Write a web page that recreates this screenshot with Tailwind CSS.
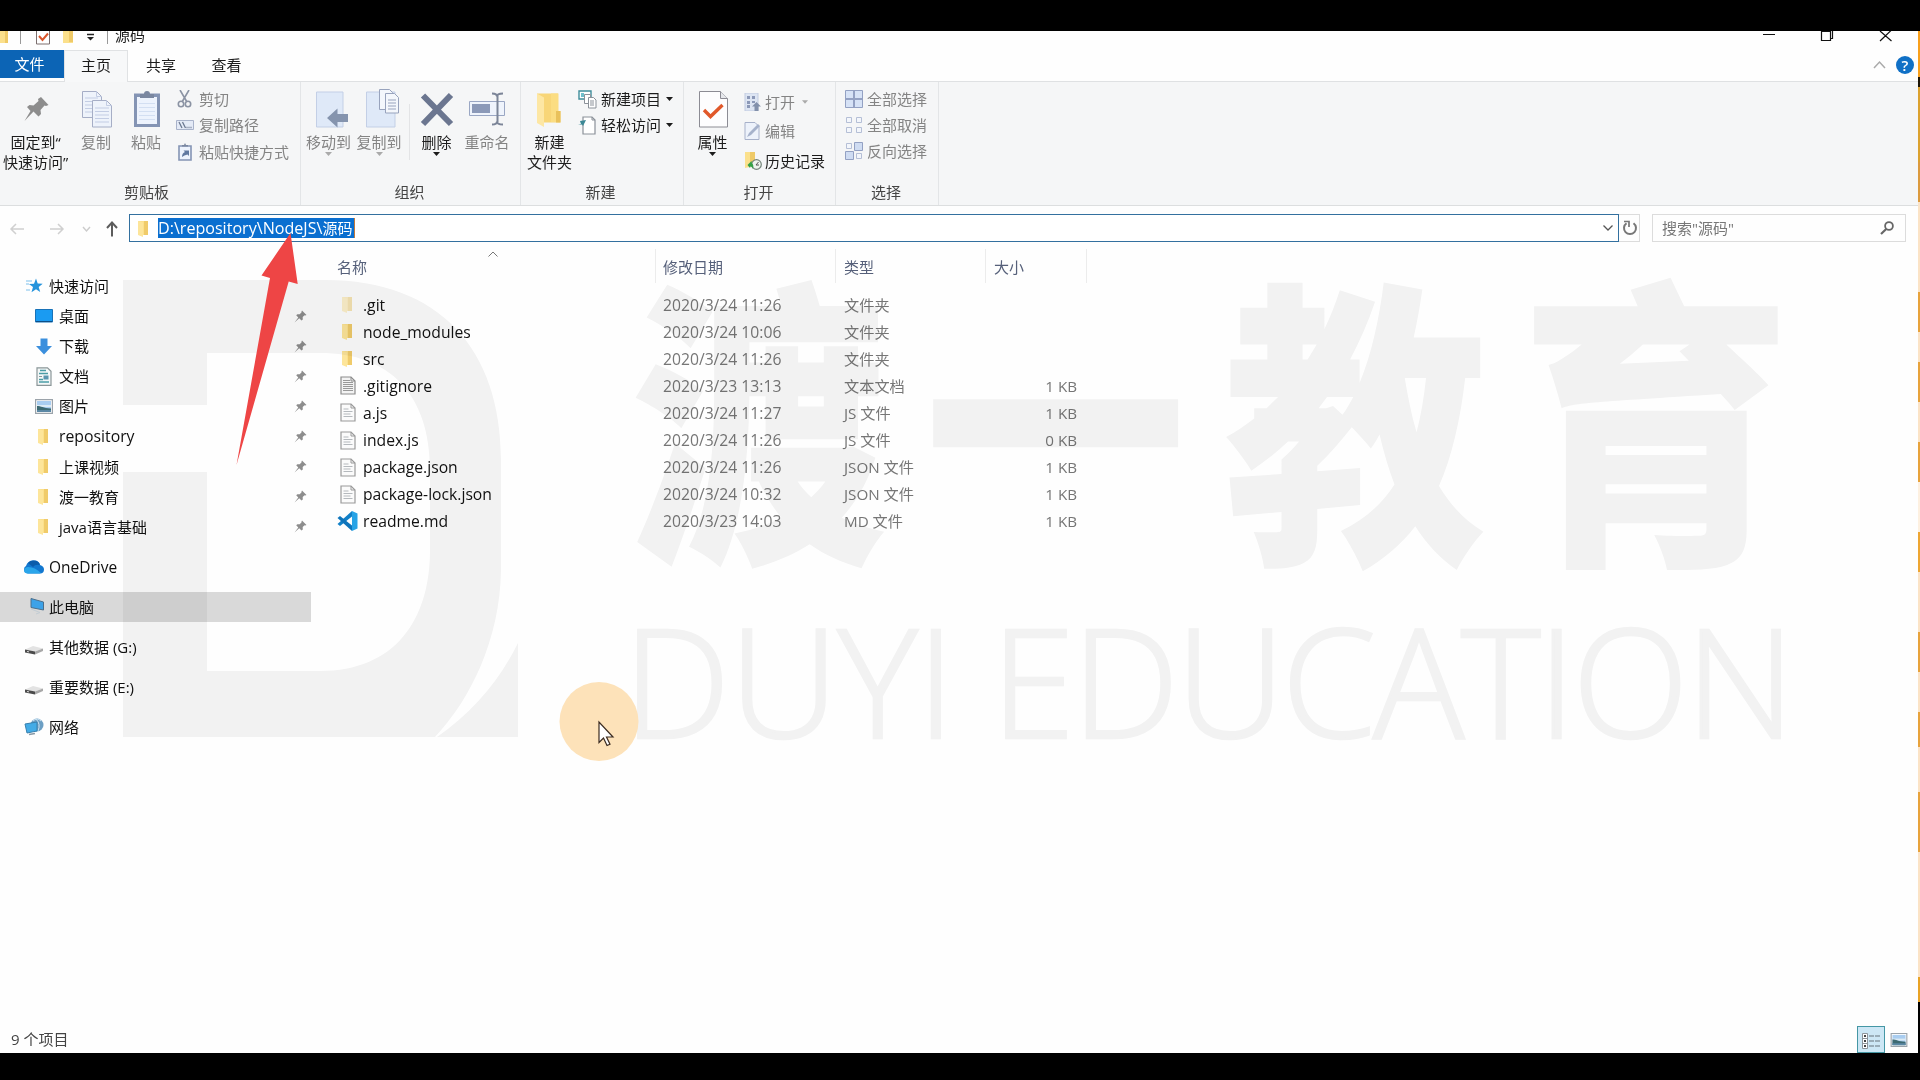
<!DOCTYPE html>
<html lang="zh-CN">
<head>
<meta charset="utf-8">
<title>源码</title>
<script src="https://cdn.jsdelivr.net/npm/@tailwindcss/browser@4"></script>
</head>
<body class="bg-black">
<!-- shared icon shapes -->
<svg class="hidden">
  <symbol id="folder" viewBox="0 0 12 17"><path d="M1 1h8v1.5h2V15H1z" fill="#fbe08c"/><path d="M7 1h4v14H7z" fill="#f0cb6a"/><path d="M1 1l5 1.5V17l-5-2z" fill="#fde59a"/></symbol>
  <symbol id="pin" viewBox="0 0 13 13"><path d="M8 .5 12.5 5l-1.3.4-.6-.2-1.900 1.900.1 2.300-1.300 1.100-2.300-2.300L.5 12.500 4.300 7.400 2.200 5.300l1.200-1.100 2.300.1 1.900-2-.1-.7z" fill="#8d8d8d"/></symbol>
  <symbol id="file" viewBox="0 0 16 19"><path d="M1 1h10l4 4v13H1z" fill="#fbfbfb" stroke="#9a9a9a" stroke-width="1.2"/><path d="M11 1v4h4" fill="none" stroke="#9a9a9a"/><path d="M3.500 6h5M3.500 8.500h9M3.500 11h7M3.500 13.500h9" stroke="#b5b9bd" stroke-width="1"/></symbol>
  <symbol id="textfile" viewBox="0 0 16 19"><path d="M1 1h10l4 4v13H1z" fill="#f3f3f3" stroke="#8c8c8c" stroke-width="1.2"/><path d="M11 1v4h4" fill="none" stroke="#8c8c8c"/><path d="M3 4.500h7M3 6.500h10M3 8.500h10M3 10.500h10M3 12.500h10M3 14.500h10" stroke="#999" stroke-width="1.1"/></symbol>
  <symbol id="drive" viewBox="0 0 20 10"><path d="M1 4.500 9 1l10 2.500-8 3z" fill="#e3e3e3"/><path d="M1 4.500 11 6.500v3L1 7.500z" fill="#4b4b4b"/><path d="M11 6.500l8-3V6l-8 3.500z" fill="#a8a8a8"/><path d="M3 6.500l2 .4" stroke="#ddd"/></symbol>
  <symbol id="photo" viewBox="0 0 18 15"><path d="M.6.600h16.800v13.800H.600z" fill="#fff" stroke="#9ba3aa" stroke-width="1.200"/><path d="M2 2h14v11H2z" fill="#a9cdf0"/><path d="M2 6h14v2H2z" fill="#dcebf5"/><path d="M2 7c4 0 6 2 14 2.500V13H2z" fill="#3d6a72"/><path d="M2 11h14v2H2z" fill="#5b88a5"/></symbol>
  <symbol id="caret" viewBox="0 0 7 4"><path d="M0 0h7L3.500 4z" fill="currentColor"/></symbol>
</svg>

<div class="relative h-[1080px] w-[1920px] overflow-hidden bg-black pt-[31px] font-['Open_Sans','Noto_Sans_CJK_SC',sans-serif] text-[15px] leading-5 text-[#1c1c1c]">
<div class="flex h-[1022px] w-full">
<div class="flex w-[1918px] flex-col overflow-hidden bg-[#fefefe]">

  <!-- title bar -->
  <header class="flex h-[19px] shrink-0 justify-between overflow-hidden">
    <div class="flex h-[19px] items-start">
      <svg class="h-[19px] w-[110px]" viewBox="0 0 110 19"><path d="M0 0h8v12H0z" fill="#fbe08c"/><path d="M5 0h3v12H5z" fill="#efca68"/><path d="M20.500 0v13M107.500 0v13" stroke="#999"/><path d="M36.500-2h13v15h-13z" fill="#fff" stroke="#7c6f6f"/><path d="m39 5 3.500 4L48 2.500" fill="none" stroke="#d9552b" stroke-width="2"/><path d="M63 0h10v12H63z" fill="#fbe08c"/><path d="M69 0h4v11h-4z" fill="#efca68"/><path d="M87 3.500h7" stroke="#222" stroke-width="1.500"/><path d="M87 6h7l-3.500 3.500z" fill="#222"/></svg>
      <span class="-mt-[6px] ml-[5px]">源码</span>
    </div>
    <svg class="h-[19px] w-[158px]" viewBox="0 0 158 19" fill="none" stroke="#111" stroke-width="1.200"><path d="M3 3.500h12M61.500.500h9v9h-9zM70.500 7.500h2V0M120 0l11.500 10M131.500-1 120 10"/></svg>
  </header>

  <!-- tabs -->
  <nav class="flex h-8 shrink-0 border-b border-[#dfe1e3]">
    <div class="flex h-[28px] w-16 items-center justify-center bg-[#0c64b5] pr-[5px] text-white">文件</div>
    <div class="flex h-8 w-16 items-center justify-center border-x border-t border-[#e0e2e4] bg-[#f7f8f9] pb-[3px]">主页</div>
    <div class="flex w-[66px] items-center justify-center pb-[2px]">共享</div>
    <div class="flex w-[65px] items-center justify-center pb-[2px]">查看</div>
    <svg class="ml-auto h-8 w-[50px]" viewBox="0 0 50 32"><path d="m6 18 5.500-6 5.500 6" fill="none" stroke="#aaa" stroke-width="1.500"/><circle cx="37" cy="15" r="9" fill="#1070c6"/><text x="37" y="20.500" text-anchor="middle" font-size="15" font-weight="600" fill="#fff">?</text></svg>
  </nav>

  <!-- ribbon -->
  <section class="flex h-[124px] shrink-0 border-b border-[#dcdedf] bg-[#f5f6f7]">
    <div class="flex w-[301px] flex-col border-r border-[#e3e5e7]">
      <div class="flex h-[100px] text-[#848484]">
        <div class="flex w-[71px] flex-col text-center whitespace-nowrap text-[#1c1c1c]">
          <svg class="h-[50px] w-[71px] shrink-0" viewBox="0 82 71 50"><path d="M41 97l7.500 8-2.500 1-1.500-.5-4 4.500.500 4-2.500 2.500-5-5L24.500 121l6-10-3.500-4 2.500-2 4 .500 5-4.500-.500-2z" fill="#8d8d8d"/></svg>
          <div>固定到“</div><div>快速访问”</div>
        </div>
        <div class="w-[50px] text-center">
          <svg class="h-[50px] w-[50px]" viewBox="71 82 50 50" fill="#eef3fb" stroke="#a6aec6"><path d="M82.500 91.500h14l5 5v21h-19z"/><path d="M96.500 91.500v5h5M85 98h13M85 101.500h13M85 105h13M85 108.500h13M85 112h13" fill="none" stroke="#c3cde4"/><path d="M92.500 100.500h14l5 5V127h-19z"/><path d="M106.500 100.500v5h5M95 108h14M95 111.500h14M95 115h14M95 118.500h14M95 122h14" fill="none" stroke="#c3cde4"/></svg>
          <div>复制</div>
        </div>
        <div class="w-[50px] text-center">
          <svg class="h-[50px] w-[50px]" viewBox="121 82 50 50"><path d="M134 93.500h26V127h-26z" fill="#8494b4"/><path d="M137 97h20v27h-20z" fill="#edf3fd"/><path d="M139 103.500h16M139 107.500h16M139 111.500h16M139 115.500h16M139 119.500h16" stroke="#d3dff2"/><path d="M140 98v-4h4q0-3 3-3t3 3h4v4z" fill="#7a87a0"/></svg>
          <div>粘贴</div>
        </div>
        <div class="flex flex-col pt-[4px] pl-[5px]">
          <div class="flex h-[26px] items-center"><svg class="mr-[5px] size-[18px]" viewBox="0 0 18 18" fill="none" stroke="#8b93a3" stroke-width="1.600"><path d="M4 0l7 12M13 0 6 12"/><circle cx="5" cy="14" r="2.700"/><circle cx="12" cy="14" r="2.700"/></svg>剪切</div>
          <div class="flex h-[26px] items-center"><svg class="mr-[5px] size-[18px]" viewBox="0 0 18 18"><path d="M.5 4.500h17v9H.500z" fill="#e4eaf6" stroke="#a9b3ca"/><path d="M3 6l3 6M6.500 6l3 6M10.500 11.500h1M12.500 11.500h1M14.500 11.500h1" stroke="#6c7890" stroke-width="1.300"/></svg>复制路径</div>
          <div class="flex h-[27px] items-center"><svg class="mr-[5px] size-[18px]" viewBox="0 0 18 18"><path d="M3 3h12v14H3z" fill="#edf3fd" stroke="#8494b4" stroke-width="1.600"/><path d="M6 3.500V2h2l1-2 1 2h2v1.500z" fill="#7a87a0"/><path d="M6 14q0-4 3-5L7.500 7.500H13V13l-1.500-1.500Q8 12 6 14z" fill="#6078a0"/></svg>粘贴快捷方式</div>
        </div>
      </div>
      <div class="pr-[7px] text-center text-[#444]">剪贴板</div>
    </div>

    <div class="flex w-[220px] flex-col border-r border-[#e3e5e7]">
      <div class="flex h-[100px] pl-[2px] text-center text-[#848484]">
        <div class="flex w-[51px] flex-col items-center whitespace-nowrap">
          <svg class="h-[50px] w-[51px]" viewBox="304 82 51 50"><path d="M317.500 92H344v35h-26.500z" fill="#dfe9f8" stroke="#c3cfe6"/><path d="M328 118l10.500-9.500v5.500H349v8h-10.500v5.500z" fill="#8594ae"/></svg>
          <div>移动到</div><svg class="h-1 w-[7px] text-[#aaa]"><use href="#caret"/></svg>
        </div>
        <div class="flex w-[50px] flex-col items-center whitespace-nowrap">
          <svg class="h-[50px] w-[50px]" viewBox="355 82 50 50"><path d="M367.500 92H396v35h-28.500z" fill="#dfe9f8" stroke="#c3cfe6"/><g fill="#f4f7fc" stroke="#98a3bd"><path d="M380.500 89.500h10l3 3v17h-13z"/><path d="M386.500 93.500h9l4 4V113h-13z"/><path d="M389 100h8M389 103h8M389 106h8M389 109h8"/></g></svg>
          <div>复制到</div><svg class="h-1 w-[7px] text-[#aaa]"><use href="#caret"/></svg>
        </div>
        <div class="mt-[22px] ml-[5px] h-14 w-px bg-[#e3e4e6]"></div>
        <div class="flex w-[53px] flex-col items-center text-[#1c1c1c]">
          <svg class="h-[50px] w-[53px]" viewBox="411 82 53 50"><path d="M424 95.500 452 124M452 95 424 124" stroke="#6b7690" stroke-width="6"/></svg>
          <div>删除</div><svg class="h-1 w-[7px]"><use href="#caret"/></svg>
        </div>
        <div class="w-[48px]">
          <svg class="h-[50px] w-[48px]" viewBox="464 82 48 50"><path d="M470.500 101.500h35v14h-35z" fill="#eff4fc" stroke="#9aa7c4"/><path d="M473 104h18v9h-18z" fill="#8b99b8"/><path d="M493 93.500q5 0 5 3 0-3 6-3M493 124.500q5 0 5-3 0 3 6 3M498.500 96v26" fill="none" stroke="#7c8598" stroke-width="2"/></svg>
          <div class="whitespace-nowrap">重命名</div>
        </div>
      </div>
      <div class="pr-[2px] text-center text-[#444]">组织</div>
    </div>

    <div class="flex w-[163px] flex-col border-r border-[#e3e5e7]">
      <div class="flex h-[100px]">
        <div class="w-[57px] text-center whitespace-nowrap">
          <svg class="h-[50px] w-[57px]" viewBox="521 82 57 50"><path d="M537 93.500h21V111h2.500v11.500H541z" fill="#f8d678"/><path d="M551 93.500h7.500V122H551z" fill="#fbdd82"/><path d="M537 93.500l7 4V127l-7-4z" fill="#fde7a4"/><path d="M556 111h4.500v11.500H556z" fill="#e9c15b"/></svg>
          <div>新建</div><div>文件夹</div>
        </div>
        <div class="flex flex-col pt-[4px]">
          <div class="flex h-[26px] items-center"><svg class="size-[19px]" viewBox="0 0 19 19" fill="#fff" stroke="#8b9199"><path d="M1 1h12v8H1z" stroke="#3f8d9b" stroke-width="1.400"/><path d="M3 3h3v4H3z" fill="#6fc0cc" stroke="none"/><path d="M6.500 4.500h6v9h-6z"/><path d="M10.500 7.500h5l2.500 2.500v8h-7.500z"/><path d="M12 11h4M12 13h4M12 15h4"/></svg><span class="ml-1">新建项目</span><svg class="ml-[5px] h-1 w-[7px]"><use href="#caret"/></svg></div>
          <div class="flex h-[26px] items-center"><svg class="size-[19px]" viewBox="0 0 19 19"><path d="M5 1h9l3 3v14H5z" fill="#fff" stroke="#8b9199" stroke-width="1.200"/><path d="M14 1v3h3" fill="none" stroke="#8b9199"/><path d="M0 9l3-1-1-3 6-1-3 6-1-1.500z" fill="#3b8895"/></svg><span class="ml-1">轻松访问</span><svg class="ml-[5px] h-1 w-[7px]"><use href="#caret"/></svg></div>
        </div>
      </div>
      <div class="pr-[3px] text-center text-[#444]">新建</div>
    </div>

    <div class="flex w-[152px] flex-col border-r border-[#e3e5e7]">
      <div class="flex h-[100px]">
        <div class="flex w-[57px] flex-col items-center">
          <svg class="h-[50px] w-[57px]" viewBox="684 82 57 50"><path d="M699.500 91.500h21l7 7V127h-28z" fill="#fdfdfe" stroke="#8c8c94"/><path d="M720.500 91.500v7h7" fill="#e6e8ec" stroke="#8c8c94"/><path d="M704 110l6.500 6.500L722.500 105" fill="none" stroke="#e0582a" stroke-width="3.400"/></svg>
          <div>属性</div><svg class="h-1 w-[7px]"><use href="#caret"/></svg>
        </div>
        <div class="flex flex-col pt-[5px] pl-[3px] text-[#848484]">
          <div class="flex h-[29px] items-center"><svg class="mr-[3px] size-[18px]" viewBox="0 0 18 18"><path d="M1 0h13v18H1z" fill="#dde5f3" stroke="#c1cbe0"/><path d="M3 3h3v3H3zM8 3h3v3H8zM3 8h3v3H3zM3 12h3v3H3zM8 8h3v2H8z" fill="#8c99b8"/><path d="M12.500 9l4.500 4.500h-2.500V18h-4v-4.500H8z" fill="#8290ab"/></svg>打开<svg class="ml-[7px] h-1 w-[6px] text-[#aaa]"><use href="#caret"/></svg></div>
          <div class="flex h-[30px] items-center"><svg class="mr-[3px] size-[18px]" viewBox="0 0 18 18"><path d="M1 .5h10l4 4V17.500H1z" fill="#edf2fb" stroke="#a7b1ca"/><path d="M3 15l2-4 9-9 2 2-9 9z" fill="#a6b2cb"/></svg>编辑</div>
          <div class="flex h-[29px] items-center text-[#1c1c1c]"><svg class="mr-[3px] size-[18px]" viewBox="0 0 18 18"><path d="M1 0h9v14l-9 2z" fill="#fbe08c"/><path d="M6 0h5v10H6z" fill="#efca68"/><circle cx="12.500" cy="12.500" r="4.800" fill="#eef3ee" stroke="#73837a" stroke-width="1.200"/><path d="M12 13l2.500-3M12 13h3" stroke="#555"/><path d="M3.500 13l4-4 .500 2.500q2 1 1 5.500-1-3-2.500-2.500l-.500 1.500z" fill="#35a148"/></svg>历史记录</div>
        </div>
      </div>
      <div class="pr-[2px] text-center text-[#444]">打开</div>
    </div>

    <div class="flex w-[103px] flex-col border-r border-[#e3e5e7]">
      <div class="flex h-[100px] flex-col pt-[4px] pl-[9px] text-[#848484]">
        <div class="flex h-[26px] items-center"><svg class="mr-1 size-[18px]" viewBox="0 0 18 18" fill="#d6e2f6" stroke="#93a1c3"><path d="M.5.500h17v17H.500z"/><path d="M9 0v18M0 9h18" stroke-width="2"/></svg>全部选择</div>
        <div class="flex h-[26px] items-center"><svg class="mr-1 size-[18px]" viewBox="0 0 18 18" fill="#f3f6fb" stroke="#b5bfd6"><path d="M1.500 1.500h5v5h-5zM11.500 1.500h5v5h-5zM1.500 11.500h5v5h-5zM11.500 11.500h5v5h-5z"/></svg>全部取消</div>
        <div class="flex h-[26px] items-center"><svg class="mr-1 size-[18px]" viewBox="0 0 18 18" fill="#cfdcf2" stroke="#93a1c3"><path d="M9.500.500h8v8h-8zM.5 9.500h8v8h-8z"/><path d="M1.500 1.500h5v5h-5zM11.500 11.500h5v5h-5z" fill="#f3f6fb" stroke="#b5bfd6"/></svg>反向选择</div>
      </div>
      <div class="pr-[2px] text-center text-[#444]">选择</div>
    </div>
  </section>

  <!-- address bar -->
  <section class="flex h-[43px] shrink-0 items-start pt-2">
    <svg class="mt-px h-[27px] w-[129px]" viewBox="0 0 129 27" fill="none"><path d="M24 14H11M16 9l-5 5 5 5M50 14h13M58 9l5 5-5 5" stroke="#d0d0d0" stroke-width="1.500"/><path d="m83 12 3.500 4 3.500-4" stroke="#ccc" stroke-width="1.400"/><path d="M112 21.500V8M107 13l5-5.500 5 5.500" stroke="#5c5c5c" stroke-width="2"/></svg>
    <div class="flex h-7 w-[1490px] items-center border border-[#33709f] bg-white">
      <svg class="ml-[7px] h-[17px] w-3"><use href="#folder"/></svg>
      <div class="ml-[9px] h-5 w-[197px] border-r border-[#c27a3a] bg-[#0a6fd0] whitespace-nowrap text-white"><span class="text-[16.1px]">D:\repository\NodeJS\</span>源码</div>
      <svg class="mr-[5px] ml-auto h-2 w-[10px]" viewBox="0 0 10 8" fill="none" stroke="#555" stroke-width="1.300"><path d="m.500 1.500 4.500 4.500 4.500-4.500"/></svg>
    </div>
    <div class="flex h-7 w-[21px] items-center justify-center border-y border-r border-[#dcdcdc] pl-[2px]"><svg class="size-[16px]" viewBox="0 0 16 16"><path d="M4.500 3.200A6 6 0 1 0 11.500 3.200" fill="none" stroke="#777" stroke-width="2"/><path d="M2 1.500h5V7" fill="none" stroke="#777" stroke-width="1.700"/></svg></div>
    <div class="ml-3 flex h-7 w-[254px] items-center justify-between border border-[#dcdcdc] pr-[11px] pl-[9px] text-[#777]">搜索"源码"<svg class="size-[14px]" viewBox="0 0 14 14" fill="none" stroke="#666" stroke-width="1.800"><circle cx="9" cy="5" r="3.900"/><path d="M6.200 8 1 13" stroke-width="2.200"/></svg></div>
  </section>

  <main class="flex min-h-0 grow">
    <!-- navigation pane -->
    <aside class="w-[311px] shrink-0 pt-[22px] text-[#111]">
      <div class="flex h-[30px] items-center pl-[26px]"><svg class="mr-[6px] h-[17px] w-[17px]" viewBox="0 0 17 17"><path d="M10 .5l1.700 5 5 .3-4 3.200 1.500 5-4.200-2.800-4.500 3 1.500-5.200-4-3 5-.3z" fill="#2493dc"/><path d="M0 3h6M0 6h3M0 12h4" stroke="#7cc0ec"/></svg>快速访问</div>
      <div class="flex h-[30.100px] items-center pr-[4px] pl-[35px]"><svg class="mr-[6px] h-[14px] w-[18px]" viewBox="0 0 18 14"><path d="M.5.500h17v12.500H.500z" fill="#1a9bf2" stroke="#1872b8"/><path d="M1 12.500h16" stroke="#0e4f86"/></svg>桌面<svg class="ml-auto size-[13px]"><use href="#pin"/></svg></div>
      <div class="flex h-[30.100px] items-center pr-[4px] pl-[35px]"><svg class="mr-[6px] h-[17px] w-[18px]" viewBox="0 0 18 17"><path d="M5.500.500h7V8H17l-8 8.500L1 8h4.500z" fill="#3b8fdd"/></svg>下载<svg class="ml-auto size-[13px]"><use href="#pin"/></svg></div>
      <div class="flex h-[30.100px] items-center pr-[4px] pl-[35px]"><svg class="mr-[6px] h-[19px] w-[18px]" viewBox="0 0 18 19"><path d="M2 .8h10.500l3.500 3.500v14H2z" fill="#f4f8f8" stroke="#8a9698" stroke-width="1.200"/><path d="M5 3.500h6M4 6.500h9M4 12.500h4M4 15h10" stroke="#4b9da6" stroke-width="1.300"/><path d="M8.500 8.500h5v4h-5z" fill="#5a96ae"/><path d="M4 9.500h3" stroke="#8a9698"/></svg>文档<svg class="ml-auto size-[13px]"><use href="#pin"/></svg></div>
      <div class="flex h-[30.100px] items-center pr-[4px] pl-[35px]"><svg class="mr-[6px] h-[15px] w-[18px]"><use href="#photo"/></svg>图片<svg class="ml-auto size-[13px]"><use href="#pin"/></svg></div>
      <div class="flex h-[30.100px] items-center pr-[4px] pl-[37px]"><svg class="mr-[10px] h-[17px] w-3"><use href="#folder"/></svg><span class="text-[15.8px]">repository</span><svg class="ml-auto size-[13px]"><use href="#pin"/></svg></div>
      <div class="flex h-[30.100px] items-center pr-[4px] pl-[37px]"><svg class="mr-[10px] h-[17px] w-3"><use href="#folder"/></svg>上课视频<svg class="ml-auto size-[13px]"><use href="#pin"/></svg></div>
      <div class="flex h-[30.100px] items-center pr-[4px] pl-[37px]"><svg class="mr-[10px] h-[17px] w-3"><use href="#folder"/></svg>渡一教育<svg class="ml-auto size-[13px]"><use href="#pin"/></svg></div>
      <div class="flex h-[30.100px] items-center pr-[4px] pl-[37px]"><svg class="mr-[10px] h-[17px] w-3"><use href="#folder"/></svg>java语言基础<svg class="ml-auto size-[13px]"><use href="#pin"/></svg></div>
      <div class="mt-[10px] flex h-[30px] items-center pl-[24px]"><svg class="mr-[5px] h-[14px] w-[20px]" viewBox="0 0 20 14"><path d="M2 6q2-6 8-5.500 5 0 6 4.500 4 1 4 4.500 0 4-4 4H4q-4-.5-4-4Q0 6.500 2 6z" fill="#1277cf"/><path d="M3 13.500q-3-.5-3-3.500 1-3 4-3 7 0 13 6-1 .5-3 .5z" fill="#2aa5ea"/><path d="M4 3q2-3 6-2.500 5 0 6 4.500-5-1-7 2z" fill="#0b5cab"/></svg><span class="text-[15.500px]">OneDrive</span></div>
      <div class="mt-[10px] flex h-[30px] items-center bg-[#d9d9d9] pl-[30px]"><svg class="mr-[5px] h-[17px] w-[14px]" viewBox="0 0 14 17"><path d="M1 .5l12.500 3.500v8L1 9.500z" fill="#3da2e8" stroke="#4c6f8b"/><path d="M1 11l9 3.500-4 1.500" fill="none" stroke="#c3cdd4"/></svg>此电脑</div>
      <div class="mt-[10px] flex h-[30px] items-center pl-[24px]"><svg class="mt-[7px] mr-[5px] h-[10px] w-5"><use href="#drive"/></svg>其他数据 (G:)</div>
      <div class="mt-[10px] flex h-[30px] items-center pl-[24px]"><svg class="mt-[7px] mr-[5px] h-[10px] w-5"><use href="#drive"/></svg>重要数据 (E:)</div>
      <div class="mt-[10px] flex h-[30px] items-center pl-[24px]"><svg class="mr-[5px] h-[18px] w-5" viewBox="0 0 20 18"><circle cx="13" cy="7" r="6.500" fill="#6c9fc4"/><path d="M9 3q4-4 8 0M12 1q5 5 2 12" fill="none" stroke="#cbe2f2"/><path d="M1 6l12-2v9L3 15z" fill="#43abe6" stroke="#3880ae"/><path d="M5 16.500l6-1" stroke="#8899a6" stroke-width="1.500"/></svg>网络</div>
    </aside>

    <!-- file list -->
    <section class="relative w-[800px] text-[#767676]">
      <svg class="absolute top-[2px] left-[177px] h-[6px] w-[10px]" viewBox="0 0 10 6" fill="none" stroke="#777"><path d="m.500 5.500 4.500-4.500 4.500 4.500"/></svg>
      <div class="grid h-[34px] grid-cols-[345px_180px_150px_101px] text-[#56607a]">
        <div class="border-r border-[#ececec] pt-2 pl-[26px]">名称</div>
        <div class="border-r border-[#ececec] pt-2 pl-[7px]">修改日期</div>
        <div class="border-r border-[#ececec] pt-2 pl-[8px]">类型</div>
        <div class="border-r border-[#ececec] pt-2 pl-[8px]">大小</div>
      </div>
      <div id="rows" class="pt-[8px]"></div>
    </section>
  </main>

  <!-- status bar -->
  <footer class="flex h-[27px] shrink-0 items-start justify-between text-[#444]">
    <span class="pt-[3px] pl-[11px]">9 个项目</span>
    <div class="flex items-start pr-[10px]">
      <div class="flex h-[27px] w-7 items-center justify-center border border-[#4597a5] bg-[#cde7f5]"><svg class="mt-[3px] h-[16px] w-[18px]" viewBox="0 0 18 16"><path d="M.5.500h5v15h-5zM.5 5.500h5M.5 10.500h5" fill="#fff" stroke="#8d949a"/><path d="M2 2h2v2H2zM2 7h2v2H2zM2 12h2v2H2z" fill="#444"/><path d="M7 3h5M13 3h5M7 8h5M13 8h5M7 13h5M13 13h5" stroke="#69747c" stroke-width="1.200"/></svg></div>
      <svg class="mt-[7px] ml-[5px] h-[14px] w-[18px]"><use href="#photo"/></svg>
    </div>
  </footer>
</div>
<!-- desktop visible beside the window -->
<div class="flex w-[2px] flex-col">
  <div class="h-[46px] bg-[#f9a01b]"></div><div class="h-[10px] bg-[#1c1508]"></div><div class="h-[75px] bg-[#dca22f]"></div><div class="h-[40px] bg-[#dc9a3e]"></div><div class="h-[90px] bg-[#fbe3c6]"></div>
  <div class="h-[40px] bg-[#e8a33c]"></div><div class="h-[30px] bg-[#fbe3c6]"></div><div class="h-[40px] bg-[#e8a33c]"></div><div class="h-[40px] bg-[#fbe3c6]"></div><div class="h-[40px] bg-[#e8a33c]"></div><div class="h-[50px] bg-[#fdf0e0]"></div><div class="h-[40px] bg-[#eea632]"></div><div class="h-[60px] bg-[#fbe3c6]"></div><div class="h-[40px] bg-[#e8a33c]"></div><div class="h-[40px] bg-[#fbe3c6]"></div><div class="h-[35px] bg-[#e8a33c]"></div><div class="h-[45px] bg-[#fbe3c6]"></div><div class="h-[60px] bg-[#e8a33c]"></div><div class="h-[125px] bg-[#fbe3c6]"></div><div class="h-[25px] bg-[#e9a325]"></div>
</div>
</div>

<!-- watermark -->
<svg class="pointer-events-none absolute inset-0 h-[1080px] w-[1920px] mix-blend-multiply" viewBox="0 0 1920 1080" fill="#f3f3f3">
  <path d="M123 280H325C440 280 501 350 501 460V570C500 640 470 700 435 737H123V472H207V671H320C395 671 430 620 430 550V470C430 395 390 353 320 353H207V405H123z"/>
  <path d="M518 643V737H437Q490 700 518 643z"/>
  <g font-family="'Noto Sans CJK SC',sans-serif" font-weight="900" font-size="302">
    <text transform="translate(630 541) scale(.85 1)">渡</text>
    <text transform="translate(924 541) scale(.87 1)">一</text>
    <text transform="translate(1224 541) scale(.87 1)">教</text>
    <text transform="translate(1520 541) scale(.9 1)">育</text>
  </g>
  <g font-family="'Open Sans',sans-serif" font-weight="300" font-size="152" stroke="#f3f3f3" stroke-width="2.500">
    <text x="623" y="738" textLength="332" lengthAdjust="spacing">DUYI</text>
    <text x="991" y="738" textLength="804" lengthAdjust="spacing">EDUCATION</text>
  </g>
</svg>

<!-- arrow and highlighted pointer -->
<svg class="pointer-events-none absolute inset-0 h-[1080px] w-[1920px]" viewBox="0 0 1920 1080">
  <path d="M290.500 233 297.700 284l-9-2.500L236.500 465 270 278l-8.500-2.500z" fill="#ee4545"/>
  <circle cx="599" cy="721.500" r="39.500" fill="#fde2b9"/>
  <path d="M599 722v20.500l4.500-4.500 3.500 7.500 3-1.300-3.500-7.200h6.500z" fill="#fff" stroke="#3b2b20" stroke-width="1.200"/>
</svg>
</div>

<script>
const files = [
  ['hidden', '.git', '2020/3/24 11:26', '文件夹', ''],
  ['folder', 'node_modules', '2020/3/24 10:06', '文件夹', ''],
  ['folder', 'src', '2020/3/24 11:26', '文件夹', ''],
  ['textfile', '.gitignore', '2020/3/23 13:13', '文本文档', '1 KB'],
  ['file', 'a.js', '2020/3/24 11:27', 'JS 文件', '1 KB'],
  ['file', 'index.js', '2020/3/24 11:26', 'JS 文件', '0 KB'],
  ['file', 'package.json', '2020/3/24 11:26', 'JSON 文件', '1 KB'],
  ['file', 'package-lock.json', '2020/3/24 10:32', 'JSON 文件', '1 KB'],
  ['code', 'readme.md', '2020/3/23 14:03', 'MD 文件', '1 KB'],
];
const icon = {
  hidden: '<svg class="h-[17px] w-3 ml-[4px] mr-[10px] opacity-50"><use href="#folder"/></svg>',
  folder: '<svg class="h-[17px] w-3 ml-[4px] mr-[10px]"><use href="#folder"/></svg>',
  file: '<svg class="h-[19px] w-4 ml-[3px] mr-[7px]"><use href="#file"/></svg>',
  textfile: '<svg class="h-[19px] w-4 ml-[3px] mr-[7px]"><use href="#textfile"/></svg>',
  code: '<svg class="h-5 w-[21px] mr-[5px]" viewBox="0 0 21 20"><path d="M15 0l5.500 2.500v15L15 20z" fill="#27a3e6"/><path d="M15 0v5.500L3 15l-2.500-2z" fill="#1180c8"/><path d="M15 20v-5.500L3 5 .5 7z" fill="#0e74bb"/></svg>',
};
document.getElementById('rows').innerHTML = files.map(f => `
  <div class="grid h-[27.1px] grid-cols-[345px_180px_150px_91px] items-center">
    <div class="flex items-center pl-[26px] text-[15.7px] text-[#111]">${icon[f[0]]}<span>${f[1]}</span></div>
    <div class="pl-[7px] text-[15.7px]">${f[2]}</div><div class="pl-[8px] text-[15.2px]">${f[3]}</div><div class="text-right text-[15.2px]">${f[4]}</div>
  </div>`).join('');
</script>
</body>
</html>
